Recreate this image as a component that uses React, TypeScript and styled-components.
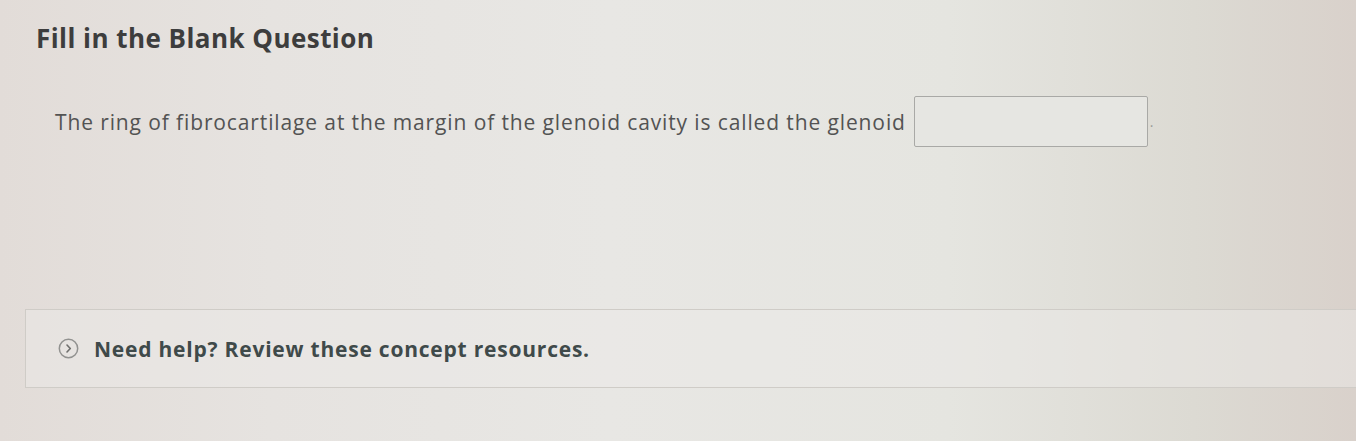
import React from 'react'
import styled, { createGlobalStyle } from 'styled-components'

const GlobalStyle = createGlobalStyle`
  html, body {
    margin: 0;
    padding: 0;
  }
  body {
    font-family: "Open Sans", "Liberation Sans", sans-serif;
  }
`

const Page = styled.div`
  box-sizing: border-box;
  width: 1356px;
  height: 441px;
  overflow: hidden;
  padding: 20px 0 0 25px;
  background: linear-gradient(
    90deg,
    #e2dcd8 0%,
    #e6e3e0 20%,
    #e8e7e4 45%,
    #e5e5e0 70%,
    #dcdad3 88%,
    #d9d1cb 100%
  );
`

const Title = styled.h2`
  margin: 0 0 0 11px;
  font-size: 26px;
  line-height: 36px;
  font-weight: 700;
  letter-spacing: 0.45px;
  color: #3d3d3d;
`

const QuestionRow = styled.div`
  display: flex;
  align-items: center;
  margin: 40px 0 0 30px;
  font-size: 21px;
  letter-spacing: 0.88px;
  color: #535353;
`

const BlankInput = styled.input`
  box-sizing: border-box;
  width: 234px;
  height: 51px;
  margin-left: 8px;
  border: 1px solid #a9a9a6;
  border-radius: 2px;
  background: #e6e6e2;
  outline: none;
`

const Period = styled.span`
  margin-left: 2px;
  color: #9a9a96;
  font-size: 14px;
`

const HelpBox = styled.div`
  display: flex;
  align-items: center;
  gap: 15px;
  height: 79px;
  margin: 162px -20px 0 0;
  padding-left: 32px;
  border: 1px solid #cfccc7;
  border-right: none;
  box-sizing: border-box;
  background: rgba(236, 234, 231, 0.5);
`

const HelpText = styled.span`
  font-size: 21px;
  font-weight: 700;
  letter-spacing: 0.78px;
  color: #3f4a4a;
`

const ChevronCircle = () => (
  <svg width="21" height="21" viewBox="0 0 21 21" fill="none">
    <circle cx="10.5" cy="10.5" r="9.2" stroke="#929290" strokeWidth="1.5" />
    <path d="M9 7 L12.3 10.5 L9 14" stroke="#6f6f6d" strokeWidth="1.6" strokeLinecap="round" strokeLinejoin="round" />
  </svg>
)

export default function App() {
  return (
    <>
      <GlobalStyle />
      <Page>
        <Title>Fill in the Blank Question</Title>
        <QuestionRow>
          <span>The ring of fibrocartilage at the margin of the glenoid cavity is called the glenoid</span>
          <BlankInput type="text" aria-label="blank" />
          <Period>.</Period>
        </QuestionRow>
        <HelpBox>
          <ChevronCircle />
          <HelpText>Need help? Review these concept resources.</HelpText>
        </HelpBox>
      </Page>
    </>
  )
}
